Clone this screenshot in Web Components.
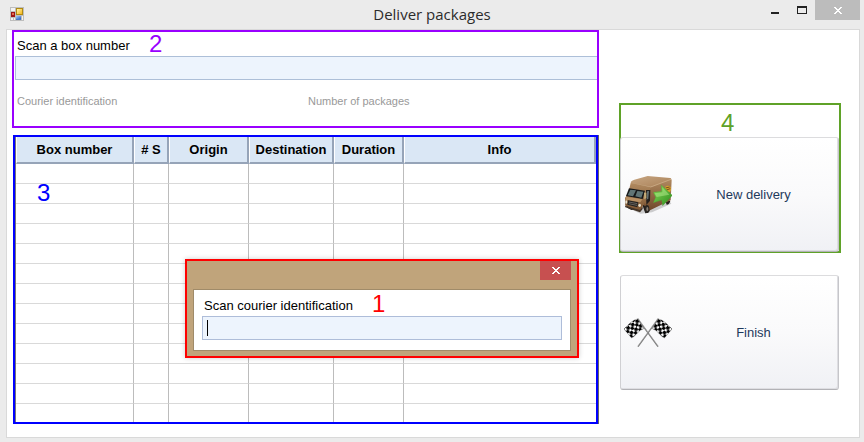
<!DOCTYPE html>
<html lang="en">
<head>
<meta charset="utf-8">
<title>Deliver packages</title>
<style>
  html, body { margin: 0; }
  body { font-family: "Liberation Sans", Arial, sans-serif; background: #ebebeb; color: #000; }
</style>
</head>
<body>
<delivery-window></delivery-window>
<script>
const define = (name, markup) => {
  const template = document.createElement('template');
  template.innerHTML = markup;
  customElements.define(name, class extends HTMLElement {
    constructor() {
      super();
      this.attachShadow({ mode: 'open' }).append(template.content.cloneNode(true));
    }
  });
};

define('app-icon', `
<style>:host { display: block; width: 14px; height: 14px; } svg { display: block; }</style>
<svg width="14" height="14" viewBox="0 0 14 14" aria-hidden="true">
  <defs>
    <linearGradient id="y" x2="1" y2="1"><stop stop-color="#fff3a8"/><stop offset="1" stop-color="#f5b61c"/></linearGradient>
    <linearGradient id="b" x2="1" y2="1"><stop stop-color="#a9cdf8"/><stop offset="1" stop-color="#2b62c4"/></linearGradient>
  </defs>
  <path fill="#bdbdbd" d="M0 0h14v14H0z"/>
  <path fill="#f3f3f3" d="M1 1h4v3H1zM1 11h2v2H1zM4 11h1v2H4zM12 9h1v4h-1z"/>
  <path fill="#b08a12" d="M6 1h7v7H6z"/><path fill="url(#y)" d="M7 2h5v5H7z"/>
  <path fill="#9c1616" d="M1 5h4v5H1z"/><path fill="#e26a50" d="M2 6h2v2H2z"/>
  <path fill="#4578c8" d="M6 9h5v4H6z"/><path fill="url(#b)" d="M6 9h5v3H6z"/>
</svg>`);

define('truck-icon', `
<style>:host { display: block; width: 48px; height: 39px; } svg { display: block; }</style>
<svg width="48" height="39" viewBox="42 72 144 117" aria-hidden="true">
  <defs>
    <linearGradient id="side" x2="0" y2="1"><stop stop-color="#b28b62"/><stop offset="1" stop-color="#70482a"/></linearGradient>
    <linearGradient id="front" x2="0" y2="1"><stop stop-color="#b18a60"/><stop offset="1" stop-color="#7c5431"/></linearGradient>
    <linearGradient id="roof" x2="1" y2="1"><stop stop-color="#c7a682"/><stop offset="1" stop-color="#a98057"/></linearGradient>
    <linearGradient id="arrow" x2="1" y2="1"><stop stop-color="#88da58"/><stop offset="1" stop-color="#2c8c1e"/></linearGradient>
  </defs>
  <path fill="#777" opacity=".35" d="M44 166L92 188 126 184 184 158 176 148 80 158z"/>
  <path fill="#26201c" d="M46 160L52 170 64 177 74 175 72 160zM97 162L106 187Q114 188 119 180L122 162zM164 145L170 161Q178 161 181 150z"/>
  <path fill="url(#side)" d="M121 107L182 83Q185 83 185 88L182 148 120 178 98 160 104 112z"/>
  <path fill="url(#roof)" d="M62 93Q65 88 73 86L113 75 181 81Q185 82 183 86L122 109 64 100z"/>
  <path fill="none" stroke="#d2b591" stroke-width="2" d="M64 98L122 108 183 85"/>
  <path fill="url(#front)" d="M62 96L121 108 117 140 110 163 103 156 91 181 46 164 45 141 55 126z"/>
  <path fill="#17191a" d="M57 112L105 119 98 144 48 135z"/>
  <path fill="#617576" d="M61 116L78 118 69 136 53 133zM82 120L100 122 94 140 76 136z"/>
  <path fill="#241f1c" d="M108 117L121 117 120 149 109 162z"/>
  <path fill="#657273" d="M111 121L117 120 115 142 110 147z"/>
  <path fill="#b89064" d="M48 137L97 145 91 154 46 146z"/>
  <path fill="#25221f" d="M54 148L85 154 82 169 52 161z"/>
  <path stroke="#a2a09a" stroke-width="1.5" d="M57 153L82 158M56 158L81 163"/>
  <ellipse cx="49" cy="153" rx="3" ry="5" fill="#e6dfcd"/><ellipse cx="89" cy="163" rx="4" ry="5" fill="#e6dfcd"/>
  <path fill="#443529" d="M45 164L90 177 98 167 98 174 90 184 46 169z"/>
  <path fill="#c4ac79" d="M102 125h7v16l-6 4z"/>
  <ellipse cx="111" cy="174" rx="7" ry="12" fill="#292522"/><ellipse cx="112" cy="174" rx="3" ry="6" fill="#8b8074"/>
  <ellipse cx="174" cy="114" rx="9" ry="10" fill="#d6a22d"/><path stroke="#7b4e1d" stroke-width="3" fill="none" d="M167 111l12-3M169 117l12-4"/>
  <path fill="url(#arrow)" stroke="#4e9e32" stroke-width="1" d="M130 124L154 121V102L187 133 158 164 155 147 130 155 137 139z"/>
  <path fill="#c0f29a" opacity=".45" d="M134 127L157 124V109L178 131 140 138z"/>
</svg>`);

define('flags-icon', `
<style>:host { display: block; width: 48px; height: 30px; } svg { display: block; }</style>
<svg width="48" height="30" viewBox="42 147 144 90" aria-hidden="true">
  <defs>
    <pattern id="check" width="2" height="2" patternUnits="userSpaceOnUse" patternTransform="matrix(-6.8 5 5 7 83 150)">
      <path fill="#fff" d="M0 0h2v2H0z"/><path fill="#000" d="M0 0h1.2v1.2H0zM1 1h1v1H1zM.9.9h1.1v1.1H.9z"/>
    </pattern>
    <g id="flag">
      <path stroke="#777" stroke-width="4" d="M83 149L144 233"/>
      <path stroke="#bbb" stroke-width="1.3" d="M84 149L145 232"/>
      <path fill="url(#check)" stroke="#222" stroke-width="1" d="M83 150Q72 152 63 160T42 180L65 207Q74 202 82 192T101 179z"/>
    </g>
  </defs>
  <use href="#flag"/><use href="#flag" transform="matrix(-1 0 0 1 228 0)"/>
</svg>`);

define('close-cross', `
<style>:host { display: block; width: 8px; height: 7px; } svg { display: block; }</style>
<svg width="8" height="7" viewBox="0 0 8 7" fill="#fff" shape-rendering="crispEdges" aria-hidden="true">
  <path d="M0 0h2v1H0zM6 0h2v1H6zM1 1h2v1H1zM5 1h2v1H5zM2 2h4v1H2zM3 3h2v1H3zM2 4h4v1H2zM1 5h2v1H1zM5 5h2v1H5zM0 6h2v1H0zM6 6h2v1H6z"/>
</svg>`);

define('title-bar', `
<style>
  :host { display: grid; grid-template-columns: 1fr auto 1fr; height: 29px; flex: none; }
  app-icon { margin: 7px 0 0 10px; }
  h1 { margin: 0; font: 15px/29px "Open Sans", "Noto Sans", sans-serif; color: #2b2b2b; }
  .controls { display: flex; justify-content: flex-end; padding-right: 4px; }
  button { border: 0; margin: 0; padding: 0; background: none; height: 20px; width: 27px; display: grid; place-items: center; }
  .close { width: 45px; background: #bcbcbc; }
  svg { display: block; }
</style>
<app-icon></app-icon>
<h1><slot></slot></h1>
<div class="controls">
  <button aria-label="Minimize"><svg width="8" height="8"><path fill="#222" d="M0 6h8v2H0z"/></svg></button>
  <button aria-label="Maximize"><svg width="10" height="8"><path fill="#222" fill-rule="evenodd" d="M0 0h10v8H0zM1 2v5h8V2z"/></svg></button>
  <button class="close" aria-label="Close"><close-cross></close-cross></button>
</div>`);

define('callout-number', `
<style>:host { display: block; position: absolute; font-size: 24px; line-height: 24px; }</style>
<slot></slot>`);

define('scan-panel', `
<style>
  :host { display: block; position: relative; box-sizing: border-box; border: 2px solid #9900ff; height: 98px; padding: 6px 0 0 1px; }
  label { display: block; font-size: 13px; line-height: 16px; padding: 0 0 2px 2px; }
  input { display: block; box-sizing: border-box; width: 100%; height: 24px; border: 1px solid #adbfd8; border-right: 0; border-radius: 0; background: #edf4fd; outline: 0; padding: 0 4px; font: inherit; }
  .facts { display: grid; grid-template-columns: 1fr 1fr; column-gap: 2px; padding: 14px 0 0 2px; font-size: 11px; line-height: 14px; color: #999; }
  callout-number { left: 135px; top: 0; color: #9900ff; }
</style>
<label for="box">Scan a box number</label>
<input id="box" type="text">
<div class="facts"><span>Courier identification</span><span>Number of packages</span></div>
<callout-number>2</callout-number>`);

define('box-table', `
<style>
  :host { display: block; position: relative; box-sizing: border-box; border: 2px solid #0000ff; box-shadow: 1px 0 0 #666; margin: 0 1px; }
  table { width: 100%; table-layout: fixed; border-collapse: separate; border-spacing: 0; border-left: 1px solid #777; }
  th { box-sizing: border-box; height: 27px; padding: 0; background: #dae7f5; font-size: 13px; line-height: 20px; border: solid; border-width: 0 2px 2px 1px; border-color: #fff #96a4b8 #96a4b8 #fff; white-space: nowrap; }
  td { box-sizing: border-box; height: 20px; padding: 0; border: solid; border-width: 0 1px 1px 0; border-color: #d9d9d9 #bcbcbc #d9d9d9; }
  td:last-child { border-right: 0; }
  tbody tr:last-child td { height: 18px; border-bottom: 0; }
  .id { width: 118px; } .s { width: 35px; } .origin { width: 80px; } .dest { width: 85px; } .dur { width: 70px; }
  callout-number { left: 22px; top: 44px; color: #0000ff; }
</style>
<table>
  <colgroup><col class="id"><col class="s"><col class="origin"><col class="dest"><col class="dur"><col></colgroup>
  <thead><tr><th>Box number</th><th># S</th><th>Origin</th><th>Destination</th><th>Duration</th><th>Info</th></tr></thead>
  <tbody></tbody>
</table>
<callout-number>3</callout-number>
<slot></slot>`);

define('courier-dialog', `
<style>
  :host { display: block; position: absolute; left: 170px; right: 17px; top: 122px; }
  dialog { position: static; display: block; box-sizing: border-box; width: 100%; margin: 0; padding: 0 6px 5px; border: 2px solid #ff0000; background: #c0a47b; color: #000; box-shadow: 0 0 5px #0003; }
  .close { display: grid; place-items: center; width: 31px; height: 19px; margin: 0 0 9px auto; padding: 0; border: 0; background: #c75050; }
  form { border: 1px solid #a08b69; background: #fff; padding: 8px 8px 10px; }
  label { display: block; font-size: 13px; line-height: 16px; padding: 0 0 2px 2px; }
  input { display: block; box-sizing: border-box; width: 100%; height: 24px; border: 1px solid #aebdd9; border-radius: 0; background: #edf4fd; outline: 0; padding: 0 4px; font: inherit; }
  .field { position: relative; }
  .caret { position: absolute; left: 5px; top: 4px; width: 1px; height: 16px; background: #000; }
  callout-number { left: 187px; top: 33px; color: #ff0000; }
</style>
<dialog open aria-label="Courier identification">
  <button class="close" type="button" aria-label="Close"><close-cross></close-cross></button>
  <form>
    <label for="courier">Scan courier identification</label>
    <div class="field"><input id="courier" type="text"><span class="caret"></span></div>
  </form>
</dialog>
<callout-number>1</callout-number>`);

define('action-button', `
<style>
  :host { display: block; }
  button { display: grid; grid-template-columns: 48px 1fr; align-items: center; box-sizing: border-box; width: 100%; height: 115px; margin: 0; padding: 0 3px; border: 1px solid; border-color: #dcdcde #c6c6ca #b2b2b6 #d0d0d3; border-radius: 3px; background: linear-gradient(#fff, #fafafb 50%, #f0f1f5); box-shadow: inset -1px -1px #dedee2; color: #1e395b; font: 13px/16px "Liberation Sans", Arial, sans-serif; }
</style>
<button type="button"><slot name="icon"></slot><span><slot></slot></span></button>`);

define('delivery-actions', `
<style>
  :host { display: block; padding-top: 73px; }
  .marked { position: relative; border: 2px solid #5fa228; padding: 32px 0 0; }
  .marked action-button { margin: 0 0 -1px -1px; }
  .plain { margin: 22px 2px 0 1px; }
  callout-number { left: 100px; top: 6px; color: #5fa228; }
</style>
<div class="marked">
  <action-button><truck-icon slot="icon"></truck-icon>New delivery</action-button>
  <callout-number>4</callout-number>
</div>
<action-button class="plain"><flags-icon slot="icon"></flags-icon>Finish</action-button>`);

define('delivery-window', `
<style>
  :host { display: flex; flex-direction: column; box-sizing: border-box; min-height: 100vh; padding-bottom: 4px; background: #ebebeb; }
  main { flex: 1; display: grid; grid-template-columns: minmax(0, 1fr) 222px; column-gap: 20px; align-items: start; margin: 0 4px 0 6px; border: 1px solid #d9d9d9; background: #fff; padding: 0 18px 13px 5px; }
  .work { display: grid; row-gap: 7px; }
</style>
<title-bar>Deliver packages</title-bar>
<main>
  <div class="work">
    <scan-panel></scan-panel>
    <box-table><courier-dialog></courier-dialog></box-table>
  </div>
  <delivery-actions></delivery-actions>
</main>`);

const body = document.querySelector('delivery-window').shadowRoot.querySelector('box-table').shadowRoot.querySelector('tbody');
for (let i = 0; i < 13; i++) {
  const row = body.insertRow();
  for (let c = 0; c < 6; c++) row.insertCell();
}
</script>
</body>
</html>
